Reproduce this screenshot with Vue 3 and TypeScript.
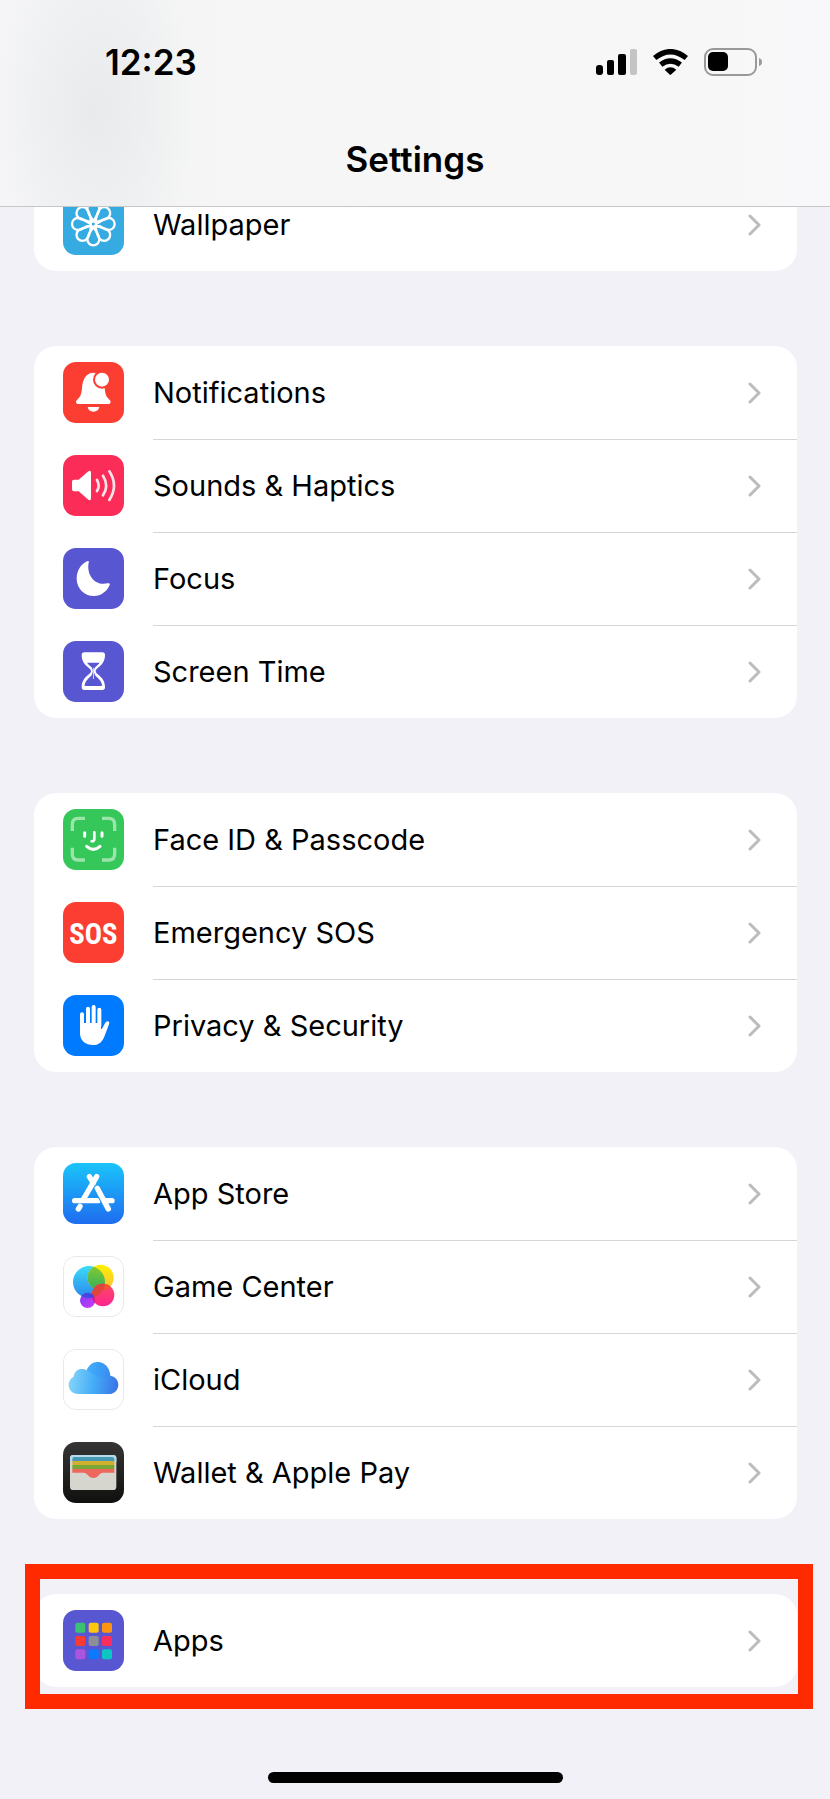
<script setup lang="ts">
type IconName =
  | 'wallpaper' | 'notifications' | 'sounds' | 'focus' | 'screentime' | 'faceid' | 'sos'
  | 'privacy' | 'appstore' | 'gamecenter' | 'icloud' | 'wallet' | 'apps'

interface Item {
  icon: IconName
  label: string
}

interface Group {
  id: string
  items: Item[]
  highlighted?: boolean
}

const groups: Group[] = [
  { id: 'display', items: [{ icon: 'wallpaper', label: 'Wallpaper' }] },
  {
    id: 'attention',
    items: [
      { icon: 'notifications', label: 'Notifications' },
      { icon: 'sounds', label: 'Sounds & Haptics' },
      { icon: 'focus', label: 'Focus' },
      { icon: 'screentime', label: 'Screen Time' },
    ],
  },
  {
    id: 'security',
    items: [
      { icon: 'faceid', label: 'Face ID & Passcode' },
      { icon: 'sos', label: 'Emergency SOS' },
      { icon: 'privacy', label: 'Privacy & Security' },
    ],
  },
  {
    id: 'services',
    items: [
      { icon: 'appstore', label: 'App Store' },
      { icon: 'gamecenter', label: 'Game Center' },
      { icon: 'icloud', label: 'iCloud' },
      { icon: 'wallet', label: 'Wallet & Apple Pay' },
    ],
  },
  { id: 'apps', items: [{ icon: 'apps', label: 'Apps' }], highlighted: true },
]

const petals: number[] = [0, 45, 90, 135, 180, 225, 270, 315]

const tiles: string[] = [
  '#3cc071', '#ffc70c', '#ff9410',
  '#fb3b32', '#8e8e96', '#fb2d5c',
  '#ab55de', '#0a7aff', '#0cc6c4',
]
</script>

<template>
  <div class="screen">
    <header class="navbar">
      <div class="status">
        <time class="clock">12:23</time>
        <div class="indicators">
          <svg class="signal" viewBox="0 0 41 26" role="img" aria-label="Signal strength">
            <rect x="0" y="16" width="7" height="10" rx="3" />
            <rect x="11" y="11" width="7" height="15" rx="2" />
            <rect x="22" y="5" width="8" height="21" rx="2" />
            <rect x="34" y="0" width="7" height="26" rx="2" fill="#c4c4c4" />
          </svg>
          <svg class="wifi" viewBox="0 0 105 78" role="img" aria-label="Wi-Fi">
            <g fill="none" stroke="#000" stroke-width="16">
              <path d="M5 27 Q52 -11 100 27" />
              <path d="M23 47 Q52 25 82 47" />
            </g>
            <path d="M35 62 Q52 48 70 62 L55 76 Q52 79 49 76 Z" />
          </svg>
          <svg class="battery" viewBox="0 0 58 28" role="img" aria-label="Battery">
            <rect x="1" y="1" width="51" height="26" rx="8" fill="none" stroke="#999" stroke-width="2" />
            <rect x="4" y="4" width="20" height="19" rx="5" />
            <path d="M55 10 Q58 11 58 14 Q58 17 55 18 Z" fill="#999" />
          </svg>
        </div>
      </div>
      <h1 class="title">Settings</h1>
    </header>

    <main class="content">
      <ul
        v-for="group in groups"
        :key="group.id"
        class="group"
        :class="{ highlighted: group.highlighted }"
      >
        <li v-for="item in group.items" :key="item.icon">
          <a class="row" :href="'#' + item.icon">
            <svg class="icon" :class="item.icon" viewBox="0 0 183 183" aria-hidden="true">
              <g v-if="item.icon === 'wallpaper'" transform="translate(91 90)" fill="none" stroke="#fff" stroke-width="7">
                <path
                  v-for="angle in petals"
                  :key="angle"
                  :transform="`rotate(${angle})`"
                  d="M0 -8 C-7 -22 -18 -32 -18 -46 A18 18 0 0 1 18 -46 C18 -32 7 -22 0 -8"
                />
                <circle r="8" />
              </g>

              <g v-else-if="item.icon === 'notifications'" fill="#fff">
                <path d="M43 126 C37 123 38 117 44 112 C54 102 55 95 57 78 C59 50 70 33 91 32 C112 33 123 50 125 78 C127 95 128 102 138 112 C144 117 145 123 139 126 Z" />
                <path d="M74 135 H109 Q106 149 91 149 Q77 149 74 135 Z" />
                <circle cx="117" cy="53" r="27" fill="#fc3d31" />
                <circle cx="117" cy="53" r="21" />
              </g>

              <g v-else-if="item.icon === 'sounds'">
                <path fill="#fff" d="M27 80 q0-6 6-6 H47 L76 49 Q84 44 84 53 V130 Q84 139 76 134 L47 109 H33 q-6 0-6-6z" />
                <g fill="none" stroke="#ffe3ea" stroke-width="8" stroke-linecap="round">
                  <path d="M102 75 Q112 92 102 108" />
                  <path d="M120 62 Q139 92 120 121" />
                  <path d="M139 49 Q167 92 139 135" />
                </g>
              </g>

              <path
                v-else-if="item.icon === 'focus'"
                fill="#fff"
                d="M72 40 Q80 36 77 44 C70 80 95 115 134 106 Q143 104 140 111 C132 130 114 144 93 144 C63 144 41 120 41 92 C41 68 54 48 72 40 Z"
              />

              <g v-else-if="item.icon === 'screentime'">
                <path
                  fill="#fff"
                  d="M64 34 H118 Q126 34 126 42 C126 66 112 74 101 84 Q95 90 101 97 C112 107 126 116 126 139 Q126 147 118 147 H64 Q56 147 56 139 C56 116 70 107 81 97 Q87 90 81 84 C70 74 56 66 56 42 Q56 34 64 34 Z"
                />
                <path fill="#5856d0" d="M72 65 H110 Q104 73 97 78 Q88 90 97 104 Q115 118 118 134 H105 L91 118 L77 134 H64 Q67 118 85 104 Q94 90 85 78 Q78 73 72 65 Z" />
                <path fill="#5856d0" d="M68 130 L91 114 L114 130 V135 H68 Z" />
                <path fill="#cfcef3" d="M90 80 H93 V114 H90 Z" />
              </g>

              <g v-else-if="item.icon === 'faceid'" fill="none" stroke-linecap="round">
                <g stroke="#9be5ab" stroke-width="10" stroke-linecap="butt">
                  <path d="M28 66 V46 Q28 28 46 28 H66" />
                  <path d="M117 28 H137 Q155 28 155 46 V66" />
                  <path d="M155 116 V135 Q155 153 137 153 H117" />
                  <path d="M66 153 H46 Q28 153 28 135 V116" />
                </g>
                <g stroke="#fff" stroke-width="9">
                  <path d="M65 71 V82 M117 71 V82" />
                  <path d="M94 70 V90 Q94 97 86 97" stroke-width="8" />
                  <path d="M71 112 Q91 130 111 112" />
                </g>
              </g>

              <text v-else-if="item.icon === 'sos'" class="sos-text" x="91" y="125" text-anchor="middle">SOS</text>

              <g v-else-if="item.icon === 'privacy'" fill="#fff">
                <path d="M51 84 V115 C51 138 68 150 90 150 C110 150 119 138 125 122 L138 88 Q141 80 134 79 Q129 79 126 85 L117 101 Q114 105 114 98 V84 Z" />
                <rect x="51" y="52" width="12" height="50" rx="6" />
                <rect x="69" y="35" width="12" height="60" rx="6" />
                <rect x="86" y="30" width="12" height="60" rx="6" />
                <rect x="103" y="38" width="12" height="60" rx="6" />
              </g>

              <g v-else-if="item.icon === 'appstore'" fill="none" stroke="#fff" stroke-width="16" stroke-linecap="round">
                <path d="M35 113 H105" />
                <path d="M79 41 L91 60" />
                <path d="M100 72 L137 138" stroke="#2594f6" stroke-width="23" stroke-linecap="butt" />
                <path d="M101 41 L61 109" />
                <path d="M103 76 L136 138" />
                <path d="M127 113 H147" />
                <path d="M51 130 L46 138" />
              </g>

              <g v-else-if="item.icon === 'gamecenter'">
                <defs>
                  <linearGradient id="gc-blue" x1="0" y1="0" x2="0" y2="1">
                    <stop offset="0" stop-color="#3cdcf5" />
                    <stop offset="1" stop-color="#2a86ee" />
                  </linearGradient>
                  <linearGradient id="gc-green" x1="0" y1="0" x2="0" y2="1">
                    <stop offset="0" stop-color="#8ccb2e" />
                    <stop offset="1" stop-color="#2fae5c" />
                  </linearGradient>
                  <linearGradient id="gc-yellow" x1="0" y1="0" x2="0" y2="1">
                    <stop offset="0" stop-color="#fff000" />
                    <stop offset="1" stop-color="#f8bd3c" />
                  </linearGradient>
                  <linearGradient id="gc-pink" x1="0" y1="0" x2="0" y2="1">
                    <stop offset="0" stop-color="#fb4a5f" />
                    <stop offset="1" stop-color="#fd2592" />
                  </linearGradient>
                  <linearGradient id="gc-purple" x1="0" y1="0" x2="1" y2="1">
                    <stop offset="0" stop-color="#7a3cf0" />
                    <stop offset="1" stop-color="#d23bfa" />
                  </linearGradient>
                  <clipPath id="gc-clip-blue"><circle cx="78" cy="78" r="48" /></clipPath>
                  <clipPath id="gc-clip-pink"><circle cx="120" cy="117" r="34" /></clipPath>
                </defs>
                <rect class="edge" x="1" y="1" width="181" height="181" rx="38" />
                <circle cx="74" cy="133" r="23" fill="url(#gc-purple)" />
                <circle cx="78" cy="78" r="48" fill="url(#gc-blue)" />
                <circle cx="113" cy="65" r="39" fill="url(#gc-yellow)" />
                <circle cx="113" cy="65" r="39" fill="url(#gc-green)" clip-path="url(#gc-clip-blue)" />
                <circle cx="120" cy="117" r="34" fill="url(#gc-pink)" />
                <g clip-path="url(#gc-clip-pink)">
                  <circle cx="113" cy="65" r="39" fill="#f4562d" />
                  <circle cx="78" cy="78" r="48" fill="#e0443f" />
                  <circle cx="74" cy="133" r="23" fill="#d91a8c" />
                </g>
                <circle cx="74" cy="133" r="23" fill="#4a45e0" clip-path="url(#gc-clip-blue)" />
              </g>

              <g v-else-if="item.icon === 'icloud'">
                <defs>
                  <linearGradient id="cloud-fill" gradientUnits="userSpaceOnUse" x1="17" y1="90" x2="166" y2="110">
                    <stop offset="0" stop-color="#86d5f9" />
                    <stop offset="0.500" stop-color="#44adf8" />
                    <stop offset="1" stop-color="#3a72e6" />
                  </linearGradient>
                </defs>
                <rect class="edge" x="1" y="1" width="181" height="181" rx="38" />
                <g fill="url(#cloud-fill)">
                  <path d="M46 135 C28 135 17 122 17 108 C17 96 24 87 32 83 C34 67 45 60 56 60 C62 60 67 61 71 64 C77 49 89 39 104 39 C124 39 140 55 142 80 C156 82 166 93 166 107 C166 122 154 135 138 135 Z" />
                  <path d="M71 64 C77 49 89 39 104 39 C124 39 140 55 142 80 C110 96 92 72 71 64 Z" fill="#2f93f5" opacity="0.350" />
                </g>
              </g>

              <g v-else-if="item.icon === 'wallet'">
                <defs>
                  <linearGradient id="wallet-back" x1="0" y1="0" x2="0" y2="1">
                    <stop offset="0" stop-color="#363435" />
                    <stop offset="1" stop-color="#10100f" />
                  </linearGradient>
                </defs>
                <rect width="183" height="183" fill="url(#wallet-back)" />
                <rect x="21" y="39" width="139" height="105" rx="10" fill="#d6d6cf" />
                <path d="M31 39 H150 Q160 39 160 49 V60 H21 V49 Q21 39 31 39 Z" fill="#b5dbea" />
                <path d="M28 57 V51 Q28 45 34 45 H147 Q154 45 154 51 V57 Z" fill="#4797b5" />
                <path d="M28 57 H154 V70 H28 Z" fill="#d0b12f" />
                <path d="M28 69 H154 V82 H28 Z" fill="#79a733" />
                <path d="M28 81 H154 V92 H120 Q114 92 110 97 Q102 108 91 108 Q80 108 72 97 Q68 92 62 92 H28 Z" fill="#ee675c" />
              </g>

              <g v-else>
                <rect
                  v-for="(color, index) in tiles"
                  :key="color"
                  :x="37 + (index % 3) * 40"
                  :y="38 + Math.floor(index / 3) * 40"
                  width="30"
                  height="30"
                  rx="6"
                  :fill="color"
                />
              </g>
            </svg>
            <span class="label">{{ item.label }}</span>
            <svg class="chevron" viewBox="0 0 13 22" aria-hidden="true">
              <path d="M2 2 L11 11 L2 20" />
            </svg>
          </a>
        </li>
      </ul>
    </main>

    <div class="home-indicator"></div>
  </div>
</template>

<style>
html,
body {
  background: #f2f1f7;
}
</style>

<style scoped>
.screen {
  box-sizing: border-box;
  display: flex;
  flex-direction: column;
  min-height: 100vh;
  padding-bottom: 16px;
  background: #f2f1f7;
  color: #000;
  font-family: Inter, "Liberation Sans", sans-serif;
}

.navbar {
  position: sticky;
  top: 0;
  z-index: 1;
  box-sizing: border-box;
  height: 207px;
  padding-top: 38px;
  border-bottom: 1px solid #c6c6c8;
  background:
    radial-gradient(ellipse 100px 170px at 95px 110px, #e9eaeb 0, #eaebec99 45%, #f5f5f600 100%),
    linear-gradient(90deg, #f5f5f8 0, #f3f4f5 60px, #f2f3f4 130px, #f6f6f6 230px, #f7f7f7 80%, #f8f8fa 100%);
}

.status {
  display: flex;
  align-items: center;
  justify-content: space-between;
  height: 48px;
  padding: 0 68px 0 105px;
}

.clock {
  font-size: 35px;
  font-weight: 600;
  line-height: 48px;
}

.indicators {
  display: flex;
  align-items: center;
  gap: 16px;
}

.signal {
  width: 41px;
  height: 26px;
}

.wifi {
  width: 35px;
  height: 26px;
}

.battery {
  width: 58px;
  height: 28px;
}

.title {
  margin: 49px 0 0;
  font-size: 35px;
  font-weight: 600;
  line-height: 48px;
  text-align: center;
}

.content {
  display: flex;
  flex-direction: column;
  gap: 75px;
  margin-top: -29px;
  padding: 0 33px 0 34px;
}

.group {
  position: relative;
  margin: 0;
  padding: 0;
  border-radius: 22px;
  background: #fff;
  list-style: none;
}

.highlighted::after {
  position: absolute;
  inset: -30px -16px -22px -9px;
  border: 15px solid #ff2a00;
  content: "";
  pointer-events: none;
}

.row {
  position: relative;
  display: flex;
  align-items: center;
  height: 93px;
  padding: 0 36px 0 29px;
  color: inherit;
  text-decoration: none;
}

li + li .row::before {
  position: absolute;
  inset: 0 0 auto 119px;
  height: 1px;
  background: #d6d6d8;
  content: "";
}

.icon {
  flex: none;
  width: 61px;
  height: 61px;
  margin-right: 29px;
  border-radius: 13px;
}

.wallpaper {
  background: #36abe1;
}

.notifications,
.sos {
  background: #fc3d31;
}

.sounds {
  background: #fb2d58;
}

.focus,
.screentime,
.apps {
  background: #5856d0;
}

.faceid {
  background: #35c75a;
}

.privacy {
  background: #007aff;
}

.appstore {
  background: linear-gradient(#1ac4fa, #1f6cf0);
}

.edge {
  fill: #fff;
  stroke: #e5e5ea;
  stroke-width: 3px;
}

.sos-text {
  fill: #fff;
  font-family: "Liberation Sans Narrow", "Roboto Condensed", Roboto, sans-serif;
  font-size: 86px;
  font-weight: 700;
}

.label {
  flex: 1;
  font-size: 29px;
  line-height: 40px;
}

.chevron {
  flex: none;
  width: 13px;
  height: 22px;
  fill: none;
  stroke: #bcbcbe;
  stroke-width: 3px;
  stroke-linecap: round;
  stroke-linejoin: round;
}

.home-indicator {
  width: 36%;
  max-width: 295px;
  height: 11px;
  margin: auto auto 0;
  border-radius: 6px;
  background: #000;
}
</style>
